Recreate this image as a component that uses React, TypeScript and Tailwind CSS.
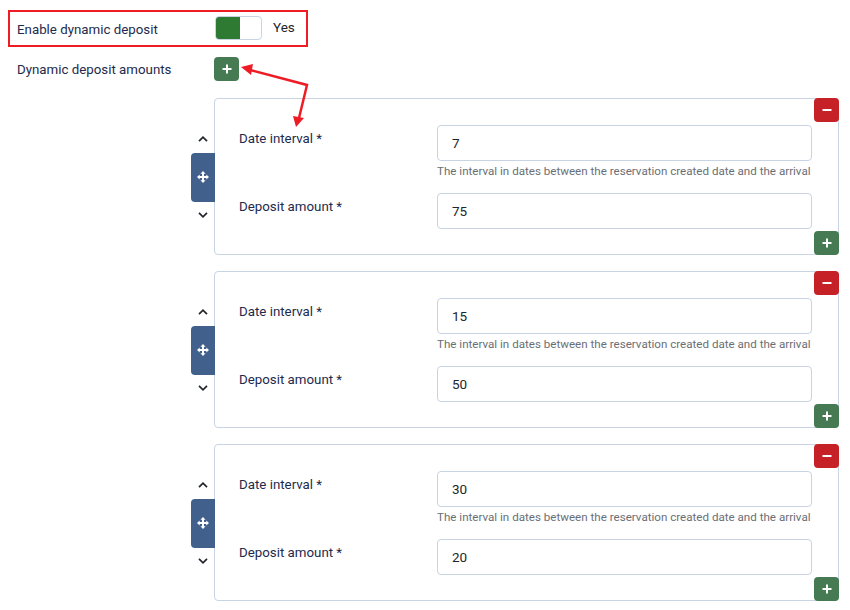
import React from "react";

function Plus({ className = "" }: { className?: string }) {
  return (
    <svg viewBox="0 0 10 10" className={className} fill="none" stroke="white" strokeWidth="2">
      <path d="M5 0.5V9.5M0.5 5H9.5" />
    </svg>
  );
}

function Minus() {
  return (
    <svg viewBox="0 0 10 10" className="w-[10px] h-[10px]" fill="none" stroke="white" strokeWidth="2">
      <path d="M0.5 5H9.5" />
    </svg>
  );
}

function MoveIcon() {
  return (
    <svg viewBox="0 0 12 12" className="w-[12px] h-[12px]" fill="white">
      <path d="M6 0L8.6 2.7H7V5H9.3V3.4L12 6L9.3 8.6V7H7V9.3H8.6L6 12L3.4 9.3H5V7H2.7V8.6L0 6L2.7 3.4V5H5V2.7H3.4Z" />
    </svg>
  );
}

function Chevron({ up }: { up?: boolean }) {
  return (
    <svg viewBox="0 0 10 6" className="w-[10px] h-[6px]" fill="none" stroke="#22262a" strokeWidth="1.7">
      <path d={up ? "M1 5.2L5 1.2L9 5.2" : "M1 0.8L5 4.8L9 0.8"} />
    </svg>
  );
}

function Card({ interval, amount }: { interval: string; amount: string }) {
  return (
    <div className="flex items-stretch">
      <div className="w-[23px] flex flex-col items-center justify-center">
        <div className="w-[24px] h-[14px] flex items-center justify-center mb-[7px]">
          <Chevron up />
        </div>
        <div className="relative z-10 w-[24px] min-w-[24px] self-start h-[49px] bg-[#41608c] rounded-l-[4px] flex items-center justify-center">
          <MoveIcon />
        </div>
        <div className="w-[24px] h-[14px] flex items-center justify-center mt-[6px]">
          <Chevron />
        </div>
      </div>
      <div className="relative w-[625px] h-[157px] border border-[#c8d3e4] rounded-[4px] bg-white pl-[24px] pr-[26px] pt-[26px]">
        <div className="flex">
          <div className="w-[198px] pt-[5px] text-[13.3px] leading-[17px] text-[#1c2b4d]">Date interval *</div>
          <div className="flex-1">
            <div className="h-[36px] border border-[#c8d3e4] rounded-[4px] flex items-center pl-[14px] text-[13.5px] text-[#22262a]">
              {interval}
            </div>
            <div className="mt-[3px] text-[11.6px] leading-[14px] text-[#6a6f75] whitespace-nowrap">
              The interval in dates between the reservation created date and the arrival
            </div>
          </div>
        </div>
        <div className="flex mt-[15px]">
          <div className="w-[198px] pt-[5px] text-[13.3px] leading-[17px] text-[#1c2b4d]">Deposit amount *</div>
          <div className="flex-1">
            <div className="h-[36px] border border-[#c8d3e4] rounded-[4px] flex items-center pl-[14px] text-[13.5px] text-[#22262a]">
              {amount}
            </div>
          </div>
        </div>
        <div className="absolute right-[-1px] top-[-1px] w-[25px] h-[24px] bg-[#c52127] rounded-[4px] flex items-center justify-center">
          <Minus />
        </div>
        <div className="absolute right-[-1px] bottom-[-1px] w-[25px] h-[24px] bg-[#457a52] rounded-[4px] flex items-center justify-center">
          <Plus className="w-[10px] h-[10px]" />
        </div>
      </div>
    </div>
  );
}

export default function App() {
  return (
    <div
      className="relative w-[850px] h-[610px] bg-white overflow-hidden"
      style={{ fontFamily: "Roboto, 'Liberation Sans', sans-serif" }}
    >
      <div className="pt-[16px] pl-[17px]">
        <div className="flex items-center h-[24px]">
          <div className="w-[198px] mt-[4px] text-[13.3px] text-[#1c2b4d]">Enable dynamic deposit</div>
          <div className="w-[47px] h-[24px] border border-[#c8d3e4] rounded-[4px] flex overflow-hidden">
            <div className="w-[24px] h-full bg-[#2e7a33]" />
          </div>
          <div className="ml-[11px] -mt-[2px] text-[13.5px] text-[#22262a]">Yes</div>
        </div>
        <div className="flex items-center mt-[17px] h-[24px]">
          <div className="w-[197px] mt-[2px] text-[13.3px] text-[#1c2b4d]">Dynamic deposit amounts</div>
          <div className="w-[25px] h-[24px] bg-[#457a52] rounded-[4px] flex items-center justify-center">
            <Plus className="w-[10px] h-[10px]" />
          </div>
        </div>
        <div className="ml-[174px] mt-[17px] flex flex-col gap-[16px]">
          <Card interval="7" amount="75" />
          <Card interval="15" amount="50" />
          <Card interval="30" amount="20" />
        </div>
      </div>

      {/* annotation overlay */}
      <div className="absolute left-[8px] top-[10px] w-[300px] h-[37px] border-[2.5px] border-[#ee1c24] pointer-events-none" />
      <svg className="absolute left-0 top-0 pointer-events-none" width="850" height="610">
        <polyline points="250,70 307,85 299,118" fill="none" stroke="#ee1c24" strokeWidth="2.5" />
        <polygon points="241,67 253,64 251,75" fill="#ee1c24" />
        <polygon points="296,127 293,116 304,118" fill="#ee1c24" />
      </svg>
    </div>
  );
}
